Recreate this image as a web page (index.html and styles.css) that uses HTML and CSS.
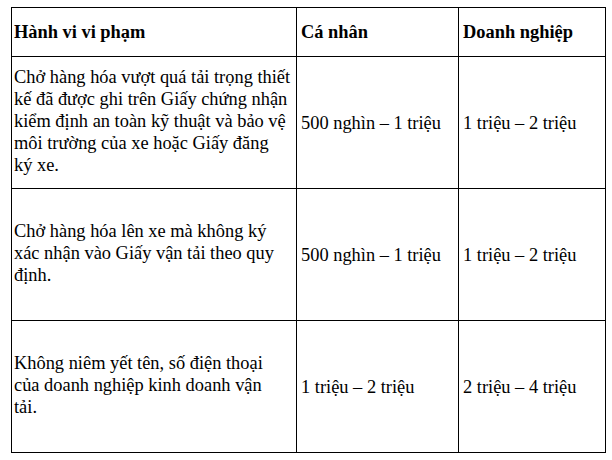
FILE: index.html
```html
<!DOCTYPE html>
<html lang="vi">
<head>
<meta charset="utf-8">
<title>Bảng mức phạt</title>
<link rel="stylesheet" href="styles.css">
</head>
<body>
<div class="page">
<table class="fines">
<colgroup>
<col class="c1"><col class="c2"><col class="c3">
</colgroup>
<thead>
<tr class="head">
<th>Hành vi vi phạm</th>
<th>Cá nhân</th>
<th>Doanh nghiệp</th>
</tr>
</thead>
<tbody>
<tr class="row">
<td class="desc">Chở hàng hóa vượt quá tải trọng thiết<br>kế đã được ghi trên Giấy chứng nhận<br>kiểm định an toàn kỹ thuật và bảo vệ<br>môi trường của xe hoặc Giấy đăng<br>ký xe.</td>
<td>500 nghìn – 1 triệu</td>
<td>1 triệu – 2 triệu</td>
</tr>
<tr class="row">
<td class="desc">Chở hàng hóa lên xe mà không ký<br>xác nhận vào Giấy vận tải theo quy<br>định.</td>
<td>500 nghìn – 1 triệu</td>
<td>1 triệu – 2 triệu</td>
</tr>
<tr class="row">
<td class="desc">Không niêm yết tên, số điện thoại<br>của doanh nghiệp kinh doanh vận<br>tải.</td>
<td>1 triệu – 2 triệu</td>
<td>2 triệu – 4 triệu</td>
</tr>
</tbody>
</table>
</div>
</body>
</html>
```
FILE: styles.css
```css
html, body {
  margin: 0;
  padding: 0;
  background: #fff;
}
.page {
  padding: 7px 0 0 11px;
}
.fines {
  border-collapse: collapse;
  table-layout: fixed;
  width: 594px;
  font-family: "Liberation Serif", "Times New Roman", serif;
  font-size: 18.4px;
  line-height: 22px;
  color: #000;
}
.c1 { width: 285px; }
.c2 { width: 162px; }
.c3 { width: 147px; }
.fines th, .fines td {
  border: 1px solid #000;
  padding: 0 3px 0 4px;
  text-align: left;
  vertical-align: middle;
}
.fines th {
  font-weight: bold;
}
.fines th:first-child, .fines td.desc {
  padding-left: 2px;
}
.fines td.desc {
  padding-bottom: 4px;
}
.head {
  height: 49px;
}
.row {
  height: 132px;
}
```
